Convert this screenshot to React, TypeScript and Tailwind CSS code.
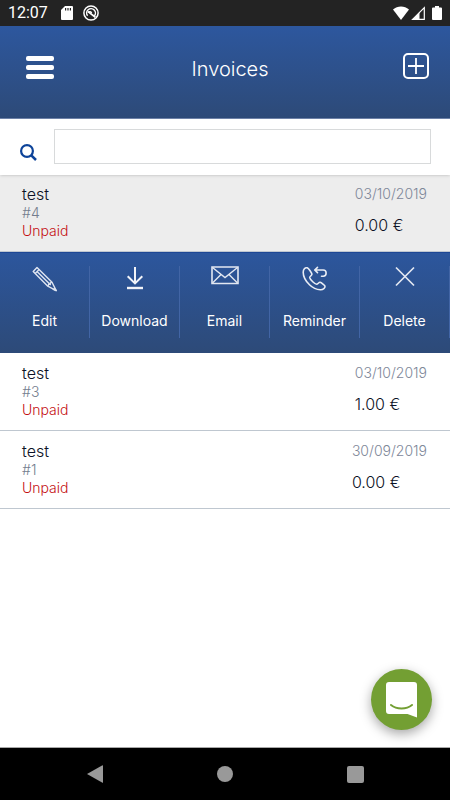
import React, { useState } from "react";

type Invoice = {
  id: number;
  client: string;
  date: string;
  amount: string;
};

const invoices: Invoice[] = [
  { id: 4, client: "test", date: "03/10/2019", amount: "0.00 €" },
  { id: 3, client: "test", date: "03/10/2019", amount: "1.00 €" },
  { id: 1, client: "test", date: "30/09/2019", amount: "0.00 €" },
];

const EditIcon = () => (
  <svg width="26" height="26" viewBox="0 0 26 26" fill="none" stroke="#dfe5f1" strokeWidth="1.4" strokeLinejoin="round">
    <path d="M1.2 5.4 5 1.4 20 16.2l4.2 8.4-8.4-4.4Z" />
    <path d="m3.2 7.4 3.9-3.8M5 5.5l13.2 13.1M15.8 20.2l1-2.2 1.5.5.1-1.6 1.6-.7" />
    <path d="m22.3 22.8 1.9 1.8-2.9-1.2Z" fill="#dfe5f1" />
  </svg>
);

const DownloadIcon = () => (
  <svg width="26" height="26" viewBox="0 0 26 26" fill="none" stroke="#f2f4f9" strokeWidth="2">
    <path d="M13 1v16M5.7 10.2 13 17.4l7.3-7.2" />
    <path d="M5 22h16" strokeWidth="2.4" />
  </svg>
);

const EmailIcon = () => (
  <svg width="28" height="26" viewBox="0 0 28 26" fill="none" stroke="#e3e8f2" strokeWidth="1.4">
    <path d="M1 1h26v16.5H1Z" strokeWidth="1.6" />
    <path d="m1.5 1.5 12.5 10 12.5-10M1.5 17 10 8.5M26.5 17 18 8.5" />
  </svg>
);

const ReminderIcon = () => (
  <svg width="26" height="26" viewBox="0 0 26 26" fill="none" stroke="#e9edf5" strokeWidth="1.6" strokeLinejoin="round" strokeLinecap="round">
    <path d="M5.2 1.8C3 1.2 1.2 3.4 1.2 6.2c0 4.3 2.6 9 6.3 12.6 3.3 3.3 7.6 5 11.2 4.9 2.4 0 4.5-1.7 4.3-3.5-.1-.9-3.7-3.6-4.9-3.9-1.2-.3-2.2 2-3.5 2-1.5 0-6.5-4.5-6.9-6.6-.2-1.3 2.2-2 2.2-3.400 0-1.100-3.300-6-4.700-6.500Z" />
    <path d="M13 4h8.2c3.900 0 3.900 6.200 0 6.200h-1.700M15.500 1.400 12.700 4l2.800 2.600" />
  </svg>
);

const DeleteIcon = () => (
  <svg width="26" height="26" viewBox="0 0 26 26" fill="none" stroke="#e3e8f2" strokeWidth="1.7">
    <path d="m4 1.5 18 18M22 1.5l-18 18" />
  </svg>
);

const actions = [
  { label: "Edit", icon: <EditIcon /> },
  { label: "Download", icon: <DownloadIcon /> },
  { label: "Email", icon: <EmailIcon /> },
  { label: "Reminder", icon: <ReminderIcon /> },
  { label: "Delete", icon: <DeleteIcon /> },
];

const StatusBar = () => (
  <div className="flex h-[26px] items-center justify-between bg-[#232323] px-2 text-white">
    <div className="flex items-center">
      <span className="w-[53px] font-[Roboto,sans-serif] text-base leading-5">12:07</span>
      <svg width="12" height="14" viewBox="0 0 12 14">
        <path d="M4 0h7a1 1 0 0 1 1 1v12a1 1 0 0 1-1 1H1a1 1 0 0 1-1-1V4Z" fill="#fff" />
        <path d="M4.6 2v2.6M7 2v2.6M9.4 2v2.6" stroke="#232323" strokeWidth="1.2" />
      </svg>
      <svg className="ml-2.5" width="16" height="16" viewBox="0 0 16 16" fill="none" stroke="#fff">
        <circle cx="8" cy="8" r="7.1" strokeWidth="1.5" />
        <path d="M4.6 10.8a4.4 4.4 0 1 1 6.600.3" strokeWidth="1.5" />
        <path d="m5 6.600 7.4 5.6" strokeWidth="1.8" />
        <path d="M5 7.5c1.5-1.5 3-.7 3.6.6" strokeWidth="1.4" />
      </svg>
    </div>
    <div className="flex items-center">
      <svg width="16" height="14" viewBox="0 0 16 14">
        <path d="M0 3.4C4.5-.6 11.5-.6 16 3.4L8 14Z" fill="#fff" />
      </svg>
      <svg className="ml-0.5" width="14" height="14" viewBox="0 0 14 14">
        <path d="M1.6 13.3 13.3 1.6v11.7Z" fill="none" stroke="#fff" strokeWidth="1.2" />
        <path d="M2 13.5 8.5 6v7.5Z" fill="#fff" />
      </svg>
      <svg className="ml-[7px]" width="10" height="14" viewBox="0 0 10 14">
        <path d="M3 0h4v1.4h2a1 1 0 0 1 1 1V13a1 1 0 0 1-1 1H1a1 1 0 0 1-1-1V2.4a1 1 0 0 1 1-1h2Z" fill="#fff" />
      </svg>
    </div>
  </div>
);

const ActionBar = () => (
  <div className="grid grid-cols-5 border-t border-[#1d4795] bg-linear-to-b from-[#2c569d] to-[#2d4a78] pt-[13px] pb-[15px]">
    {actions.map((action) => (
      <button
        key={action.label}
        type="button"
        className="flex h-[72px] flex-col items-center justify-between border-r border-[#4265a5] pb-[7px] text-sm leading-5 text-white"
      >
        {action.icon}
        {action.label}
      </button>
    ))}
  </div>
);

const App = () => {
  const [selected, setSelected] = useState<number>(4);
  const [search, setSearch] = useState("");

  return (
    <div className="relative flex min-h-screen flex-col bg-white font-[Inter,sans-serif]">
      <StatusBar />

      <header className="flex h-[93px] items-center justify-between border-b border-[#6f84aa] bg-linear-to-b from-[#2d579e] to-[#2d4a78] px-5 pb-3">
        <button type="button" aria-label="Menu" className="flex w-10 flex-col items-center gap-1 pt-0.5">
          <span className="h-[5px] w-7 rounded-xs bg-white" />
          <span className="h-[5px] w-7 rounded-xs bg-white" />
          <span className="h-[5px] w-7 rounded-xs bg-white" />
        </button>
        <h1 className="pt-1.5 text-xl leading-7 font-light text-white">Invoices</h1>
        <button type="button" aria-label="New invoice" className="flex w-[30px] justify-end pr-px">
          <svg width="26" height="26" viewBox="0 0 26 26" fill="none" stroke="#fff">
            <rect x="1" y="1" width="24" height="24" rx="4" strokeWidth="2" />
            <path d="M13 5v16M5 13h16" strokeWidth="1.8" />
          </svg>
        </button>
      </header>

      <div className="relative z-10 flex h-14 items-center bg-white pr-[19px] pb-0.5 pl-5 shadow-sm">
        <label htmlFor="search" className="w-[34px] shrink-0 pt-3">
          <svg role="img" aria-label="Search" width="17" height="17" viewBox="0 0 17 17" fill="none" stroke="#0d4399">
            <circle cx="7" cy="7" r="5.9" strokeWidth="2.2" />
            <path d="m11.3 11.3 4.700 4.700" strokeWidth="2.5" />
          </svg>
        </label>
        <input
          id="search"
          type="text"
          value={search}
          onChange={(e) => setSearch(e.target.value)}
          className="h-[35px] min-w-0 flex-1 border border-[#d8dadb] px-2 text-sm outline-none"
        />
      </div>

      <ul className="-mt-px flex-1">
        {invoices.map((invoice) => {
          const isSelected = invoice.id === selected;
          return (
            <li key={invoice.id}>
              <button
                type="button"
                onClick={() => setSelected(invoice.id)}
                className={`flex w-full items-start justify-between border-b border-[#bfc7d0] pt-2.5 pr-[23px] pb-[11px] pl-[22px] text-left font-light ${
                  isSelected ? "bg-[#ededed]" : "bg-white"
                }`}
              >
                <div>
                  <p className="text-base leading-5 text-[#0c1226]">{invoice.client}</p>
                  <p className="text-sm leading-[18px] text-[#737d8e]">#{invoice.id}</p>
                  <p className="text-sm leading-[18px] text-[#c40f12]">Unpaid</p>
                </div>
                <div>
                  <p className="text-sm leading-5 text-[#7e8799]">{invoice.date}</p>
                  <p className="mt-[11px] text-base leading-5 text-[#0c1226]">{invoice.amount}</p>
                </div>
              </button>
              {isSelected && <ActionBar />}
            </li>
          );
        })}
      </ul>

      <button
        type="button"
        aria-label="Open chat"
        className="absolute right-[18px] bottom-[70px] flex h-[61px] w-[61px] items-center justify-center rounded-full bg-[#739f33] shadow-[0_4px_12px_rgba(0,0,0,0.35)]"
      >
        <svg width="31" height="36" viewBox="0 0 31 36">
          <path d="M3 0h25a3 3 0 0 1 3 3v32.5L21.5 32H3a3 3 0 0 1-3-3V3a3 3 0 0 1 3-3Z" fill="#fff" />
          <path d="M5 23c5.5 4.6 15.5 4.6 21 0" fill="none" stroke="#739f33" strokeWidth="2" strokeLinecap="round" />
        </svg>
      </button>

      <nav className="grid h-[53px] grid-cols-3 items-center border-t border-[#a8a8a8] bg-black px-[30px]">
        <button type="button" aria-label="Back" className="flex justify-center">
          <svg width="17" height="18" viewBox="0 0 17 18" fill="#999">
            <path d="M0 9 15.5.2q.5-.2.5.3v17q0 .5-.5.3Z" />
          </svg>
        </button>
        <button type="button" aria-label="Home" className="flex justify-center">
          <span className="h-4 w-4 rounded-full bg-[#999]" />
        </button>
        <button type="button" aria-label="Recent apps" className="flex justify-center">
          <span className="h-[17px] w-[17px] rounded-xs bg-[#999]" />
        </button>
      </nav>
    </div>
  );
};

export default App;
